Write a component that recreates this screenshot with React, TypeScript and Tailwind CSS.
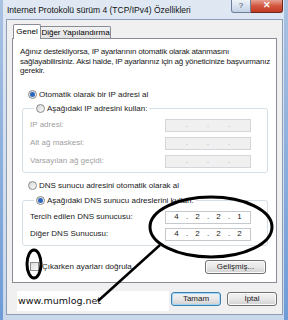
import React from "react";

function Radio({ checked }: { checked?: boolean }) {
  return (
    <span className="w-[9px] h-[9px] rounded-full border border-[#8b8b8b] bg-linear-to-br from-[#d4d4d4] to-[#fcfcfc] flex items-center justify-center shrink-0">
      {checked && <span className="w-[5px] h-[5px] rounded-full bg-[#2c67bd]" />}
    </span>
  );
}

function IpField({ values, disabled }: { values?: string[]; disabled?: boolean }) {
  const segs = values ?? ["", "", "", ""];
  return (
    <div
      className={
        disabled
          ? "w-[86px] h-[13px] border border-[#d2d6da] bg-[#f0f0f0] flex items-center text-[7px] text-[#9a9a9a]"
          : "w-[86px] h-[13px] border border-[#c5c9ce] bg-white flex items-center text-[8px] text-[#222]"
      }
    >
      {segs.map((v, i) => (
        <React.Fragment key={i}>
          {i > 0 && <span className="w-0 flex justify-center">.</span>}
          <span className="flex-1 text-center">{v}</span>
        </React.Fragment>
      ))}
    </div>
  );
}

function Btn({ children, def, w }: { children: React.ReactNode; def?: boolean; w: string }) {
  return (
    <div
      className={
        (def
          ? "border-[#3c7fb1] shadow-[inset_0_0_0_1px_#9fd7f5] "
          : "border-[#707070] shadow-[inset_0_0_0_1px_#fbfbfb] ") +
        w +
        " h-[14px] rounded-[3px] border bg-linear-to-b from-[#f2f2f2] via-[#e8e8e8] to-[#d0d0d0] flex items-center justify-center text-[8px] text-[#222]"
      }
    >
      {children}
    </div>
  );
}

export default function App() {
  return (
    <div className="relative w-[288px] h-[320px] overflow-hidden bg-linear-to-b from-[#dfe8f3] to-[#c9d8eb] font-['Liberation_Sans',Arial,sans-serif] text-black">
      {/* frame edges */}
      <div className="absolute left-0 top-0 w-[3px] h-full bg-linear-to-b from-[#a9c2e2] to-[#6f9bd6]" />
      <div className="absolute right-0 top-0 w-[4px] h-full bg-linear-to-b from-[#a9c2e2] to-[#6f9bd6]" />

      {/* title bar */}
      <div className="relative h-[19px] flex items-start justify-between">
        <div className="pl-[7px] pt-[5px] text-[8.5px] leading-[10px] text-[#111]">
          Internet Protokolü sürüm 4 (TCP/IPv4) Özellikleri
        </div>
        <div className="flex mr-[5px]">
          <div className="w-[20px] h-[13px] rounded-bl-[3px] border border-[#6d7f99] border-t-0 bg-linear-to-b from-[#eef3f9] to-[#c3d2e5] flex items-center justify-center text-[8px] text-[#3a4a60]">
            ?
          </div>
          <div className="w-[32px] h-[13px] rounded-br-[3px] border border-[#6b2a20] border-t-0 border-l-0 bg-linear-to-b from-[#e6a092] via-[#d2553d] to-[#c43a22] flex items-center justify-center text-[9px] font-bold text-white">
            ✕
          </div>
        </div>
      </div>

      {/* client area */}
      <div className="ml-[6px] w-[277px] h-[296px] bg-[#f0f0f0] border border-[#8d9db3] flex flex-col">
        {/* tabs */}
        <div className="pt-[4px] pl-[6px] h-[18px] flex items-end">
          <div className="relative z-10 -mb-px h-[15px] w-[28px] bg-white border border-b-0 border-[#898c95] rounded-t-[2px] flex items-center justify-center text-[8px]">
            Genel
          </div>
          <div className="h-[12px] w-[70px] bg-linear-to-b from-[#f2f2f2] to-[#e3e3e3] border border-b-0 border-l-0 border-[#898c95] rounded-tr-[2px] flex items-center justify-center text-[8px]">
            Diğer Yapılandırma
          </div>
        </div>

        {/* panel */}
        <div className="ml-[5px] w-[265px] h-[245px] bg-white border border-[#898c95] flex flex-col text-[8px] leading-[9.5px] text-[#1a1a1a]">
          <div className="pl-[7px] pt-[8px] pr-0 tracking-[-0.2px]">
            Ağınız destekliyorsa, IP ayarlarının otomatik olarak atanmasını sağlayabilirsiniz. Aksi halde, IP ayarlarınız için ağ yöneticinize başvurmanız gerekir.
          </div>

          <div className="mt-[13px] ml-[15px] h-[12px] flex items-center gap-[2px]">
            <Radio checked />
            <span>Otomatik olarak bir IP adresi al</span>
          </div>

          <fieldset className="mt-[2px] ml-[9px] w-[246px] border border-[#d5dfe5] rounded-[3px] pl-[7px] pr-[16px] pb-[4px]">
            <legend className="ml-[4px] px-[2px] h-[12px] flex items-center gap-[2px]">
              <Radio />
              <span>Aşağıdaki IP adresini kullan:</span>
            </legend>
            <div className="mt-[4px] flex flex-col gap-[5px] text-[#a0a0a0]">
              <div className="flex items-center justify-between">
                <span>IP adresi:</span>
                <IpField disabled />
              </div>
              <div className="flex items-center justify-between">
                <span>Alt ağ maskesi:</span>
                <IpField disabled />
              </div>
              <div className="flex items-center justify-between">
                <span>Varsayılan ağ geçidi:</span>
                <IpField disabled />
              </div>
            </div>
          </fieldset>

          <div className="mt-[7px] ml-[15px] h-[12px] flex items-center gap-[2px]">
            <Radio />
            <span>DNS sunucu adresini otomatik olarak al</span>
          </div>

          <fieldset className="mt-[3px] ml-[9px] w-[246px] border border-[#d5dfe5] rounded-[3px] pl-[7px] pr-[16px] pb-[4px]">
            <legend className="ml-[4px] px-[2px] h-[12px] flex items-center gap-[2px]">
              <Radio checked />
              <span>Aşağıdaki DNS sunucu adreslerini kullan:</span>
            </legend>
            <div className="mt-[4px] flex flex-col gap-[4px]">
              <div className="flex items-center justify-between">
                <span>Tercih edilen DNS sunucusu:</span>
                <IpField values={["4", "2", "2", "1"]} />
              </div>
              <div className="flex items-center justify-between">
                <span>Diğer DNS Sunucusu:</span>
                <IpField values={["4", "2", "2", "2"]} />
              </div>
            </div>
          </fieldset>

          <div className="mt-[14px] ml-[17px] mr-[10px] h-[14px] flex items-center justify-between">
            <div className="flex items-center gap-[3px]">
              <span className="w-[9px] h-[9px] border border-[#8e8f8f] bg-linear-to-br from-[#dcdcdc] to-[#fafafa] shrink-0" />
              <span>Çıkarken ayarları doğrula</span>
            </div>
            <Btn w="w-[61px]">Gelişmiş...</Btn>
          </div>
        </div>

        {/* footer */}
        <div className="mt-[9px] pr-[5px] flex justify-end gap-[6px]">
          <Btn def w="w-[50px]">Tamam</Btn>
          <Btn w="w-[50px]">İptal</Btn>
        </div>
      </div>

      {/* watermark */}
      <div className="absolute left-[17px] top-[291px] w-[152px] h-[20px] bg-white flex items-center pl-[1px] font-['DejaVu_Sans',sans-serif] text-[9.5px] text-[#111]">
        www.mumlog.net
      </div>

      {/* annotations */}
      <svg className="absolute left-0 top-0 pointer-events-none" width="288" height="320" viewBox="0 0 288 320">
        <ellipse cx="211" cy="227" rx="61" ry="30" fill="none" stroke="#000" strokeWidth="3" />
        <ellipse cx="34" cy="264" rx="7" ry="14" fill="none" stroke="#000" strokeWidth="3" />
        <line x1="98" y1="301" x2="160" y2="245" stroke="#000" strokeWidth="2.5" />
      </svg>
    </div>
  );
}
